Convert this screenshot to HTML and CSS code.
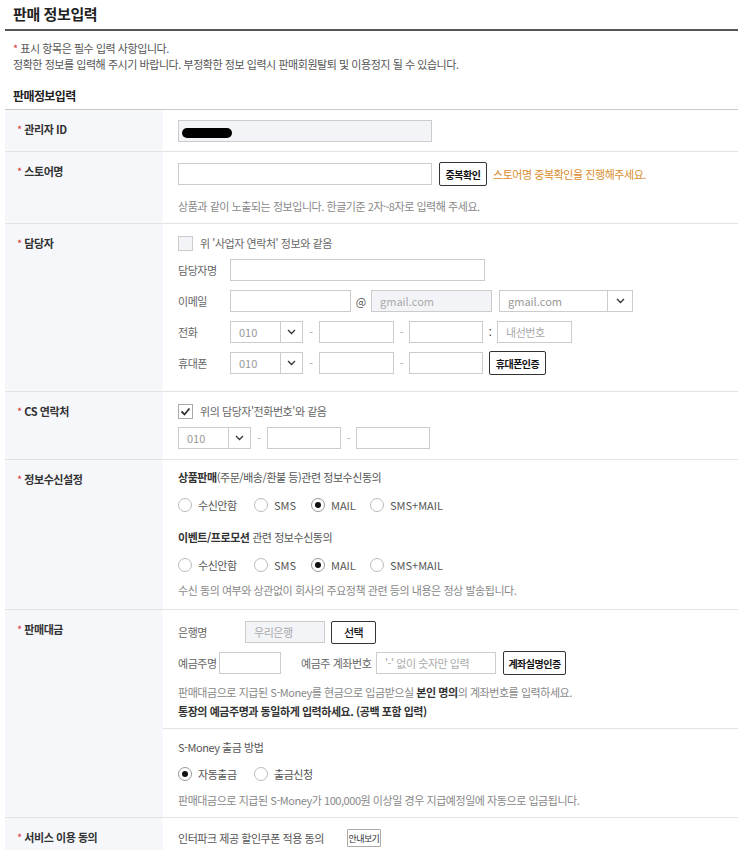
FILE: index.html
```html
<!DOCTYPE html>
<html lang="ko">
<head>
<meta charset="utf-8">
<title>판매 정보입력</title>
<link rel="stylesheet" href="styles.css">
</head>
<body>
<div class="page">
  <h1 class="page-title">판매 정보입력</h1>
  <div class="notice">
    <p><span class="req">*</span> 표시 항목은 필수 입력 사항입니다.</p>
    <p>정확한 정보를 입력해 주시기 바랍니다. 부정확한 정보 입력시 판매회원탈퇴 및 이용정지 될 수 있습니다.</p>
  </div>
  <h2 class="section-title">판매정보입력</h2>

  <div class="form-table">
    <div class="row">
      <div class="th"><span class="req">*</span> 관리자 ID</div>
      <div class="td td-id">
        <div class="field disabled w254"><span class="redact"></span></div>
      </div>
    </div>

    <div class="row">
      <div class="th"><span class="req">*</span> 스토어명</div>
      <div class="td td-store">
        <div class="line">
          <input class="field w254" type="text">
          <button class="btn btn-dup" type="button">중복확인</button>
          <span class="warn">스토어명 중복확인을 진행해주세요.</span>
        </div>
        <p class="help help-store">상품과 같이 노출되는 정보입니다. 한글기준 2자~8자로 입력해 주세요.</p>
      </div>
    </div>

    <div class="row">
      <div class="th"><span class="req">*</span> 담당자</div>
      <div class="td td-contact">
        <label class="check"><span class="box"></span><span class="check-text">위 '사업자 연락처' 정보와 같음</span></label>
        <div class="line">
          <span class="sub">담당자명</span>
          <input class="field w255" type="text">
        </div>
        <div class="line">
          <span class="sub">이메일</span>
          <input class="field w121" type="text">
          <span class="at">@</span>
          <div class="field disabled w121 en">gmail.com</div>
          <div class="select w134 ml7"><span class="sel-val en">gmail.com</span><span class="sel-arrow wide"><svg width="9" height="6" viewBox="0 0 9 6"><path d="M1 1l3.5 3.5L8 1" fill="none" stroke="#333" stroke-width="1.3"/></svg></span></div>
        </div>
        <div class="line">
          <span class="sub">전화</span>
          <div class="select w73"><span class="sel-val en">010</span><span class="sel-arrow"><svg width="9" height="6" viewBox="0 0 9 6"><path d="M1 1l3.5 3.5L8 1" fill="none" stroke="#333" stroke-width="1.3"/></svg></span></div>
          <span class="dash d16">-</span>
          <input class="field w75" type="text">
          <span class="dash d15">-</span>
          <input class="field w74" type="text">
          <span class="colon">:</span>
          <input class="field w75" type="text" placeholder="내선번호">
        </div>
        <div class="line">
          <span class="sub">휴대폰</span>
          <div class="select w73"><span class="sel-val en">010</span><span class="sel-arrow"><svg width="9" height="6" viewBox="0 0 9 6"><path d="M1 1l3.5 3.5L8 1" fill="none" stroke="#333" stroke-width="1.3"/></svg></span></div>
          <span class="dash d16">-</span>
          <input class="field w75" type="text">
          <span class="dash d15">-</span>
          <input class="field w74" type="text">
          <button class="btn btn-phone" type="button">휴대폰인증</button>
        </div>
      </div>
    </div>

    <div class="row">
      <div class="th"><span class="req">*</span> CS 연락처</div>
      <div class="td td-cs">
        <label class="check"><span class="box checked"><svg width="11" height="9" viewBox="0 0 11 9"><path d="M1.5 4.5l3 3 5-6" fill="none" stroke="#333" stroke-width="1.8"/></svg></span><span class="check-text">위의 담당자'전화번호'와 같음</span></label>
        <div class="line line-cs">
          <div class="select w73"><span class="sel-val en">010</span><span class="sel-arrow"><svg width="9" height="6" viewBox="0 0 9 6"><path d="M1 1l3.5 3.5L8 1" fill="none" stroke="#333" stroke-width="1.3"/></svg></span></div>
          <span class="dash d16">-</span>
          <input class="field w74" type="text">
          <span class="dash d15">-</span>
          <input class="field w74" type="text">
        </div>
      </div>
    </div>

    <div class="row">
      <div class="th"><span class="req">*</span> 정보수신설정</div>
      <div class="td td-recv">
        <p class="q"><b>상품판매</b>(주문/배송/환불 등)관련 정보수신동의</p>
        <div class="radios">
          <label class="radio rw1"><span class="circle"></span>수신안함</label>
          <label class="radio rw2"><span class="circle"></span><span class="en">SMS</span></label>
          <label class="radio rw3"><span class="circle on"></span><span class="en">MAIL</span></label>
          <label class="radio"><span class="circle"></span><span class="en">SMS+MAIL</span></label>
        </div>
        <p class="q q2"><b>이벤트/프로모션</b> 관련 정보수신동의</p>
        <div class="radios">
          <label class="radio rw1"><span class="circle"></span>수신안함</label>
          <label class="radio rw2"><span class="circle"></span><span class="en">SMS</span></label>
          <label class="radio rw3"><span class="circle on"></span><span class="en">MAIL</span></label>
          <label class="radio"><span class="circle"></span><span class="en">SMS+MAIL</span></label>
        </div>
        <p class="help help-recv">수신 동의 여부와 상관없이 회사의 주요정책 관련 등의 내용은 정상 발송됩니다.</p>
      </div>
    </div>

    <div class="row">
      <div class="th"><span class="req">*</span> 판매대금</div>
      <div class="td td-split">
        <div class="part part-bank">
          <div class="line">
            <span class="sub sub-bank">은행명</span>
            <div class="field disabled w80">우리은행</div>
            <button class="btn btn-select" type="button">선택</button>
          </div>
          <div class="line line-acc">
            <span class="sub sub-owner">예금주명</span>
            <input class="field w62" type="text">
            <span class="sub sub-accno">예금주 계좌번호</span>
            <input class="field w120" type="text" placeholder="'-' 없이 숫자만 입력">
            <button class="btn btn-acc" type="button">계좌실명인증</button>
          </div>
          <p class="help help-bank">판매대금으로 지급된 S-Money를 현금으로 입금받으실 <b>본인 명의</b>의 계좌번호를 입력하세요.</p>
          <p class="help-strong">통장의 예금주명과 동일하게 입력하세요. (공백 포함 입력)</p>
        </div>
        <div class="part part-money">
          <p class="q">S-Money 출금 방법</p>
          <div class="radios r-gap2">
            <label class="radio rw1"><span class="circle on"></span>자동출금</label>
            <label class="radio"><span class="circle"></span>출금신청</label>
          </div>
          <p class="help help-money">판매대금으로 지급된 S-Money가 100,000원 이상일 경우 지급예정일에 자동으로 입금됩니다.</p>
        </div>
      </div>
    </div>

    <div class="row row-last">
      <div class="th"><span class="req">*</span> 서비스 이용 동의</div>
      <div class="td td-service">
        <div class="line">
          <span class="svc-text">인터파크 제공 할인쿠폰 적용 동의</span>
          <button class="btn btn-guide" type="button">안내보기</button>
        </div>
      </div>
    </div>
  </div>
</div>
</body>
</html>
```

FILE: styles.css
```css
* { box-sizing: border-box; }

body {
  margin: 0;
  font-family: "Noto Sans CJK KR", "Noto Sans", sans-serif;
  font-size: 11px;
  letter-spacing: -0.45px;
  color: #333;
  background: #fff;
}

p { margin: 0; }

.page {
  width: 733px;
  margin-left: 5px;
}

.page-title {
  margin: 0;
  padding: 4px 8px 5px;
  font-size: 15px;
  line-height: 20px;
  letter-spacing: -0.4px;
  font-weight: 700;
  color: #222;
  border-bottom: 2px solid #555;
}

.notice {
  margin-top: 9px;
  padding-left: 8px;
  color: #555;
  line-height: 16px;
}

.req { color: #d83a3a; font-weight: 400; }

.section-title {
  margin: 16px 0 0;
  padding: 0 8px 5px;
  font-size: 12px;
  line-height: 16px;
  letter-spacing: -0.6px;
  font-weight: 700;
  color: #222;
  border-bottom: 1px solid #c8c8c8;
}

.row {
  display: grid;
  grid-template-columns: 158px 1fr;
  border-bottom: 1px solid #e3e3e3;
}

.row-last { border-bottom: none; }

.th {
  background: #f6f7fa;
  padding: 11px 0 0 12px;
  font-weight: 700;
  line-height: 16px;
  color: #333;
}

.td {
  padding: 10px 15px 9px;
  display: flex;
  flex-direction: column;
  align-items: flex-start;
}

.line {
  display: flex;
  align-items: center;
  height: 24px;
  white-space: nowrap;
}

.en { letter-spacing: 0; }

/* fields */
.field {
  height: 22px;
  border: 1px solid #ccc;
  background: #fff;
  padding: 0 8px;
  font: inherit;
  letter-spacing: -0.45px;
  line-height: 20px;
  color: #aaa;
  outline: none;
  margin: 0;
  display: flex;
  align-items: center;
}

.field::placeholder { color: #aaa; }

.field.disabled { background: #f3f4f8; }
.field.en { letter-spacing: 0; }

.w254 { width: 254px; }
.w255 { width: 255px; }
.w121 { width: 121px; }
.w134 { width: 134px; }
.w120 { width: 120px; }
.w80 { width: 80px; }
.w75 { width: 75px; }
.w74 { width: 74px; }
.w73 { width: 73px; }
.w62 { width: 62px; }
.ml7 { margin-left: 7px; }

.redact {
  display: inline-block;
  width: 50px;
  height: 10px;
  margin-top: 3px;
  margin-left: -5px;
  border-radius: 5px;
  background: #000;
}

/* buttons */
.btn {
  font: inherit;
  letter-spacing: -0.5px;
  font-weight: 700;
  color: #111;
  background: #fff;
  border: 1px solid #333;
  border-radius: 2px;
  padding: 0;
  height: 24px;
  cursor: pointer;
  white-space: nowrap;
}

.btn-dup { width: 48px; margin-left: 7px; font-size: 10px; }
.btn-phone { width: 57px; margin-left: 6px; font-size: 10px; }
.btn-select { width: 45px; height: 23px; margin-left: 6px; font-weight: 500; }
.btn-acc { width: 63px; margin-left: 7px; font-size: 10px; }
.btn-guide {
  height: 18px;
  width: 34px;
  margin-left: 23px;
  font-size: 9px;
  letter-spacing: -0.6px;
  font-weight: 400;
  border-color: #aaa;
  border-radius: 1px;
  color: #333;
}

.warn {
  margin-left: 6px;
  color: #d88c2c;
}

.help {
  color: #888;
  line-height: 16px;
}

.help b { color: #333; }

.help-store { margin-top: 12px; }

/* 담당자 */
.td-contact { padding: 11px 15px 16px; }

.check {
  display: flex;
  align-items: center;
  height: 16px;
}

.box {
  width: 15px;
  height: 15px;
  border: 1px solid #ccc;
  background: #f3f4f8;
  margin-right: 7px;
  display: flex;
  align-items: center;
  justify-content: center;
}

.box.checked {
  background: #fff;
  border-color: #aaa;
}

.check-text { color: #666; }

.td-contact .line { margin-top: 7px; }

.sub {
  width: 52px;
  color: #666;
  flex: none;
}

.at {
  width: 20px;
  text-align: center;
  color: #555;
  letter-spacing: 0;
}

.select {
  height: 22px;
  border: 1px solid #ccc;
  background: #fff;
  display: flex;
  align-items: stretch;
}

.sel-val {
  flex: 1;
  padding-left: 8px;
  line-height: 20px;
  color: #999;
}

.sel-arrow {
  width: 22px;
  border-left: 1px solid #ccc;
  display: flex;
  align-items: center;
  justify-content: center;
}

.sel-arrow.wide { width: 25px; }

.dash {
  color: #aaa;
  text-align: center;
}

.d16 { width: 16px; }
.d15 { width: 15px; }

.colon {
  width: 14px;
  text-align: center;
  color: #333;
}

/* CS */
.td-cs { padding: 11px 15px 9px; }
.line-cs { margin-top: 7px; }

/* 정보수신 */
.td-recv { padding: 9px 15px 11px; }

.q {
  line-height: 16px;
  color: #555;
}

.q b { color: #333; }

.q2 { margin-top: 16px; }

.radios {
  display: flex;
  align-items: center;
  height: 16px;
  margin-top: 12px;
}

.radio {
  display: flex;
  align-items: center;
  color: #555;
}

.rw1 { width: 76px; }
.rw2 { width: 57px; }
.rw3 { width: 59px; }

.circle {
  width: 14px;
  height: 14px;
  border: 1px solid #bbb;
  border-radius: 50%;
  background: #fff;
  margin-right: 6px;
  display: flex;
  align-items: center;
  justify-content: center;
  flex: none;
}

.circle.on { border-color: #999; }

.circle.on::after {
  content: "";
  width: 6px;
  height: 6px;
  border-radius: 50%;
  background: #111;
}

.help-recv { margin-top: 9px; }

/* 판매대금 */
.td-split {
  padding: 0;
  align-items: stretch;
}

.part {
  display: flex;
  flex-direction: column;
  align-items: flex-start;
}

.part-bank {
  padding: 10px 15px 9px;
  border-bottom: 1px solid #e3e3e3;
}

.part-money { padding: 10px 15px 9px; }

.sub-bank { width: 67px; }
.sub-owner { width: 41px; }
.sub-accno { width: 75px; margin-left: 20px; color: #666; }

.line-acc { margin-top: 7px; }

.help-bank { margin-top: 9px; }

.help-strong {
  margin-top: 3px;
  line-height: 16px;
  font-weight: 700;
  color: #333;
}

.r-gap2 { margin-top: 11px; }
.help-money { margin-top: 10px; }

/* 서비스 */
.td-service { padding: 8px 15px 8px; }

.svc-text { color: #555; }
```
